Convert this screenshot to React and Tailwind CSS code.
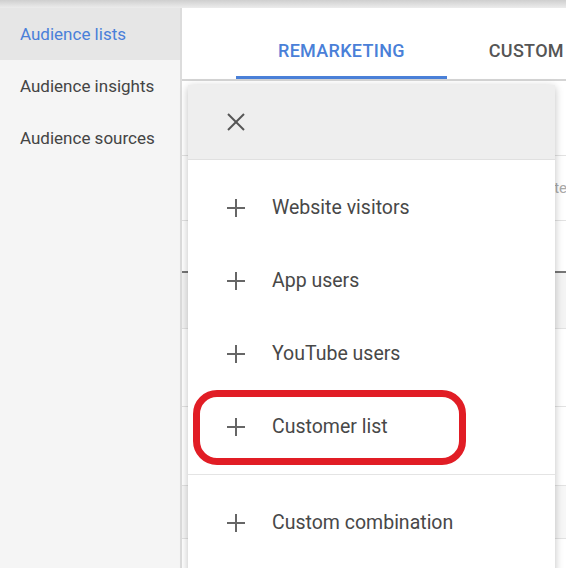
import React from "react";

const items = ["Website visitors", "App users", "YouTube users", "Customer list"];

const Plus = () => (
    <svg width="20" height="20" viewBox="0 0 20 20" fill="none" stroke="#666" strokeWidth="2">
        <line x1="10" y1="1" x2="10" y2="19" />
        <line x1="1" y1="10" x2="19" y2="10" />
    </svg>
);

const MenuItem = ({ label }) => (
    <div className="flex h-[73px] items-center pl-[38px]">
        <Plus />
        <span className="ml-[26px] text-[19.5px] text-[#484848]">{label}</span>
    </div>
);

export default function App() {
    return (
        <div className="relative h-[568px] w-[566px] overflow-hidden bg-white font-['Roboto',sans-serif]">
            {/* top shadow strip */}
            <div className="h-[8px] bg-gradient-to-b from-[#cfcfcf] to-[#ececec]"></div>

            <div className="flex h-[560px]">
                {/* Sidebar */}
                <aside className="w-[182px] shrink-0 border-r-2 border-[#dcdcdc] bg-[#f5f5f5]">
                    <div className="flex h-[52px] items-center bg-[#e6e6e6] px-[20px] pt-[2px] text-[17px] text-[#4a7fd9]">Audience lists</div>
                    <div className="flex h-[52px] items-center px-[20px] pt-[2px] text-[17px] text-[#444]">Audience insights</div>
                    <div className="flex h-[52px] items-center px-[20px] pt-[2px] text-[17px] text-[#444]">Audience sources</div>
                </aside>

                {/* Main */}
                <main className="relative min-w-0 flex-1">
                    <div className="flex h-[73px] border-b-2 border-[#d4d4d4] pl-[54px]">
                        <div className="flex shrink-0 items-center border-b-[3px] border-[#4a80d8] px-[42px] pt-[16px] text-[18px] tracking-[0.3px] font-medium text-[#4a80d8]">REMARKETING</div>
                        <div className="flex shrink-0 items-center px-[42px] pt-[14px] text-[18px] tracking-[0.3px] font-medium whitespace-nowrap text-[#555]">CUSTOM</div>
                    </div>

                    {/* table behind the popup */}
                    <div className="flex flex-col">
                        <div className="h-[75px] border-b border-[#e2e2e2]"></div>
                        <div className="flex h-[65px] items-center justify-end border-b border-[#e2e2e2] text-[15px] text-[#aaa]">
                            <span className="-mr-[1px]">Date</span>
                        </div>
                        <div className="h-[52px] border-b-2 border-[#777]"></div>
                        <div className="h-[56px] border-b border-[#e2e2e2] bg-[#f4f4f4]"></div>
                        <div className="h-[78px] border-b border-[#e2e2e2]"></div>
                        <div className="h-[79px] border-b border-[#e2e2e2]"></div>
                        <div className="h-[53px] border-b border-[#e2e2e2] bg-[#f7f7f7]"></div>
                    </div>

                    {/* popup menu */}
                    <div className="absolute left-[6px] top-[77px] -bottom-[30px] w-[367px] bg-white shadow-[0_2px_8px_rgba(0,0,0,0.25)]">
                        <div className="flex h-[75px] items-center border-b border-[#e0e0e0] bg-[#eeeeee] pl-[39px]">
                            <svg width="18" height="18" viewBox="0 0 18 18" fill="none" stroke="#555" strokeWidth="2">
                                <line x1="1" y1="1" x2="17" y2="17" />
                                <line x1="17" y1="1" x2="1" y2="17" />
                            </svg>
                        </div>
                        <div className="border-b border-[#e4e4e4] pt-[11px] pb-[11px]">
                            {items.map((label) => (
                                <MenuItem key={label} label={label} />
                            ))}
                        </div>
                        <div className="pt-[11px]">
                            <MenuItem label="Custom combination" />
                        </div>
                    </div>
                </main>
            </div>

            {/* red annotation */}
            <div className="absolute left-[193px] top-[390px] h-[75px] w-[273px] rounded-[24px] border-[7px] border-[#e11d25]"></div>
        </div>
    );
}
